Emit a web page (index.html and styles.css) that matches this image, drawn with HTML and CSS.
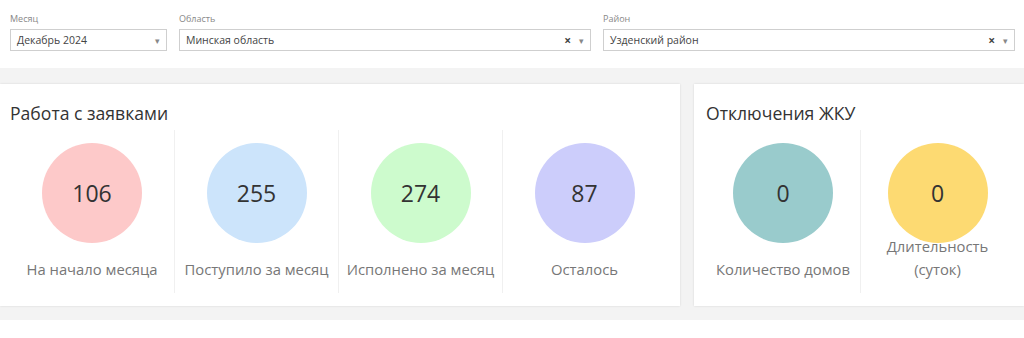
FILE: index.html
```html
<!DOCTYPE html>
<html lang="ru">
<head>
    <meta charset="UTF-8">
    <meta name="viewport" content="width=device-width, initial-scale=1.0">
    <title>Заявки</title>
    <link rel="stylesheet" href="styles.css">
</head>
<body>

    <div class="filters">
        <div class="field">
            <label>Месяц</label>
            <div class="select">
                <span class="value">Декабрь 2024</span>
                <span class="arrow">&#9662;</span>
            </div>
        </div>
        <div class="field">
            <label>Область</label>
            <div class="select">
                <span class="value">Минская область</span>
                <span class="clear">&times;</span>
                <span class="arrow">&#9662;</span>
            </div>
        </div>
        <div class="field">
            <label>Район</label>
            <div class="select">
                <span class="value">Узденский район</span>
                <span class="clear">&times;</span>
                <span class="arrow">&#9662;</span>
            </div>
        </div>
    </div>

    <div class="main">
        <div class="card requests">
            <h2>Работа с заявками</h2>
            <div class="stats">
                <div class="stat">
                    <div class="circle pink">106</div>
                    <div class="label">На начало месяца</div>
                </div>
                <div class="stat">
                    <div class="circle blue">255</div>
                    <div class="label">Поступило за месяц</div>
                </div>
                <div class="stat">
                    <div class="circle green">274</div>
                    <div class="label">Исполнено за месяц</div>
                </div>
                <div class="stat">
                    <div class="circle purple">87</div>
                    <div class="label">Осталось</div>
                </div>
            </div>
        </div>
        <div class="card outages">
            <h2>Отключения ЖКУ</h2>
            <div class="stats">
                <div class="stat">
                    <div class="circle teal">0</div>
                    <div class="label">Количество домов</div>
                </div>
                <div class="stat">
                    <div class="circle yellow">0</div>
                    <div class="label wrap">Длительность (суток)</div>
                </div>
            </div>
        </div>
    </div>

</body>
</html>
```

FILE: styles.css
```css
body {
    font-family: "Open Sans", "Noto Sans", sans-serif;
    background-color: #fff;
    margin: 0;
    padding: 0;
    overflow: hidden;
}
.filters {
    display: grid;
    grid-template-columns: 157px 1fr 1fr;
    gap: 12px;
    padding: 12px 9px 0 10px;
    height: 56px;
    background-color: #fff;
}
.field label {
    display: block;
    font-size: 9px;
    color: #888;
    height: 17px;
    line-height: 14px;
}
.select {
    display: flex;
    align-items: center;
    height: 20px;
    border: 1px solid #cfcfcf;
    padding: 0 6px 0 6px;
    font-size: 10.5px;
    color: #444;
}
.select .value {
    flex: 1;
}
.select .clear {
    font-size: 12px;
    font-weight: bold;
    color: #444;
    margin-right: 8px;
}
.select .arrow {
    font-size: 9px;
    color: #888;
}
.main {
    display: grid;
    grid-template-columns: 680px 1fr;
    gap: 14px;
    background-color: #f3f3f3;
    padding: 16px 0 14px;
}
.card {
    background-color: #fff;
    box-shadow: 0 0 2px rgba(0, 0, 0, 0.12);
    padding: 16px 0 13px 10px;
}
.card.outages {
    padding-left: 12px;
}
.card h2 {
    margin: 0 0 4px;
    font-size: 17.6px;
    font-weight: normal;
    line-height: 26px;
    color: #333;
}
.stats {
    display: grid;
    grid-template-columns: repeat(4, 164px);
}
.outages .stats {
    grid-template-columns: repeat(2, 154px);
}
.stat {
    display: flex;
    flex-direction: column;
    align-items: center;
    padding: 13px 0 12px;
}
.stat + .stat {
    border-left: 1px solid #f0f0f0;
}
.circle {
    width: 100px;
    height: 100px;
    border-radius: 50%;
    display: flex;
    align-items: center;
    justify-content: center;
    font-size: 23px;
    color: #333;
}
.label {
    margin-top: 15px;
    height: 23px;
    display: flex;
    flex-direction: column;
    justify-content: flex-end;
    text-align: center;
    font-size: 14.8px;
    line-height: 23px;
    color: #777;
    white-space: nowrap;
}
.label.wrap {
    white-space: normal;
    max-width: 115px;
}
.pink { background-color: #fdc9c9; }
.blue { background-color: #cce4fb; }
.green { background-color: #cdfbcd; }
.purple { background-color: #cccdfb; }
.teal { background-color: #99cbcc; }
.yellow { background-color: #fdda72; }
```
